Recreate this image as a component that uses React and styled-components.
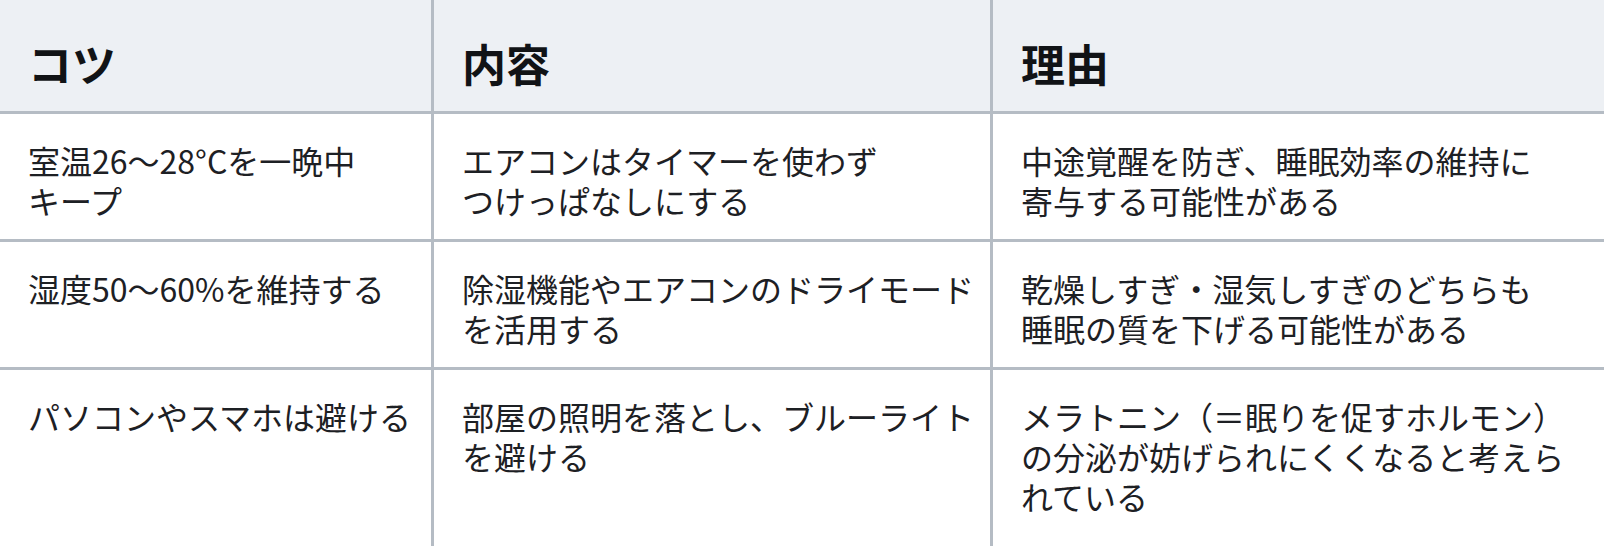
import React from 'react';
import styled, { createGlobalStyle } from 'styled-components';

const GlobalStyle = createGlobalStyle`
    body {
        margin: 0;
        background: #ffffff;
        font-family: 'Noto Sans CJK JP', 'Noto Sans', sans-serif;
    }
`;

const Table = styled.div`
    display: grid;
    grid-template-columns: 434px 559px 1fr;
    grid-template-rows: auto auto auto 1fr;
    min-height: 100vh;
    width: 100%;
`;

const HeadCell = styled.div`
    box-sizing: border-box;
    padding: 36px 12px 20px 28px;
    background: #edf0f4;
    border-bottom: 3px solid #b5bcc4;
    border-right: ${(p) => (p.$last ? 'none' : '3px solid #b5bcc4')};
    font-size: 44px;
    line-height: 55px;
    font-weight: 700;
    color: #111316;
`;

const Cell = styled.div`
    box-sizing: border-box;
    padding: 26px 12px 19px 28px;
    border-bottom: ${(p) => (p.$lastRow ? 'none' : '3px solid #b5bcc4')};
    border-right: ${(p) => (p.$last ? 'none' : '3px solid #b5bcc4')};
    font-size: 32px;
    line-height: 40px;
    color: #1d2024;
    white-space: nowrap;
`;

const head = ['コツ', '内容', '理由'];

const rows = [
    [
        ['室温26〜28°Cを一晩中', 'キープ'],
        ['エアコンはタイマーを使わず', 'つけっぱなしにする'],
        ['中途覚醒を防ぎ、睡眠効率の維持に', '寄与する可能性がある'],
    ],
    [
        ['湿度50〜60%を維持する'],
        ['除湿機能やエアコンのドライモード', 'を活用する'],
        ['乾燥しすぎ・湿気しすぎのどちらも', '睡眠の質を下げる可能性がある'],
    ],
    [
        ['パソコンやスマホは避ける'],
        ['部屋の照明を落とし、ブルーライト', 'を避ける'],
        [
            'メラトニン（＝眠りを促すホルモン）',
            'の分泌が妨げられにくくなると考えら',
            'れている',
        ],
    ],
];

const App = () => {
    return (
        <>
            <GlobalStyle />
            <Table>
                {head.map((h, i) => (
                    <HeadCell key={h} $last={i === head.length - 1}>
                        {h}
                    </HeadCell>
                ))}
                {rows.map((row, r) =>
                    row.map((lines, c) => (
                        <Cell
                            key={r + '-' + c}
                            $last={c === row.length - 1}
                            $lastRow={r === rows.length - 1}
                        >
                            {lines.map((line, k) => (
                                <React.Fragment key={k}>
                                    {k > 0 && <br />}
                                    {line}
                                </React.Fragment>
                            ))}
                        </Cell>
                    ))
                )}
            </Table>
        </>
    );
};

export default App;
